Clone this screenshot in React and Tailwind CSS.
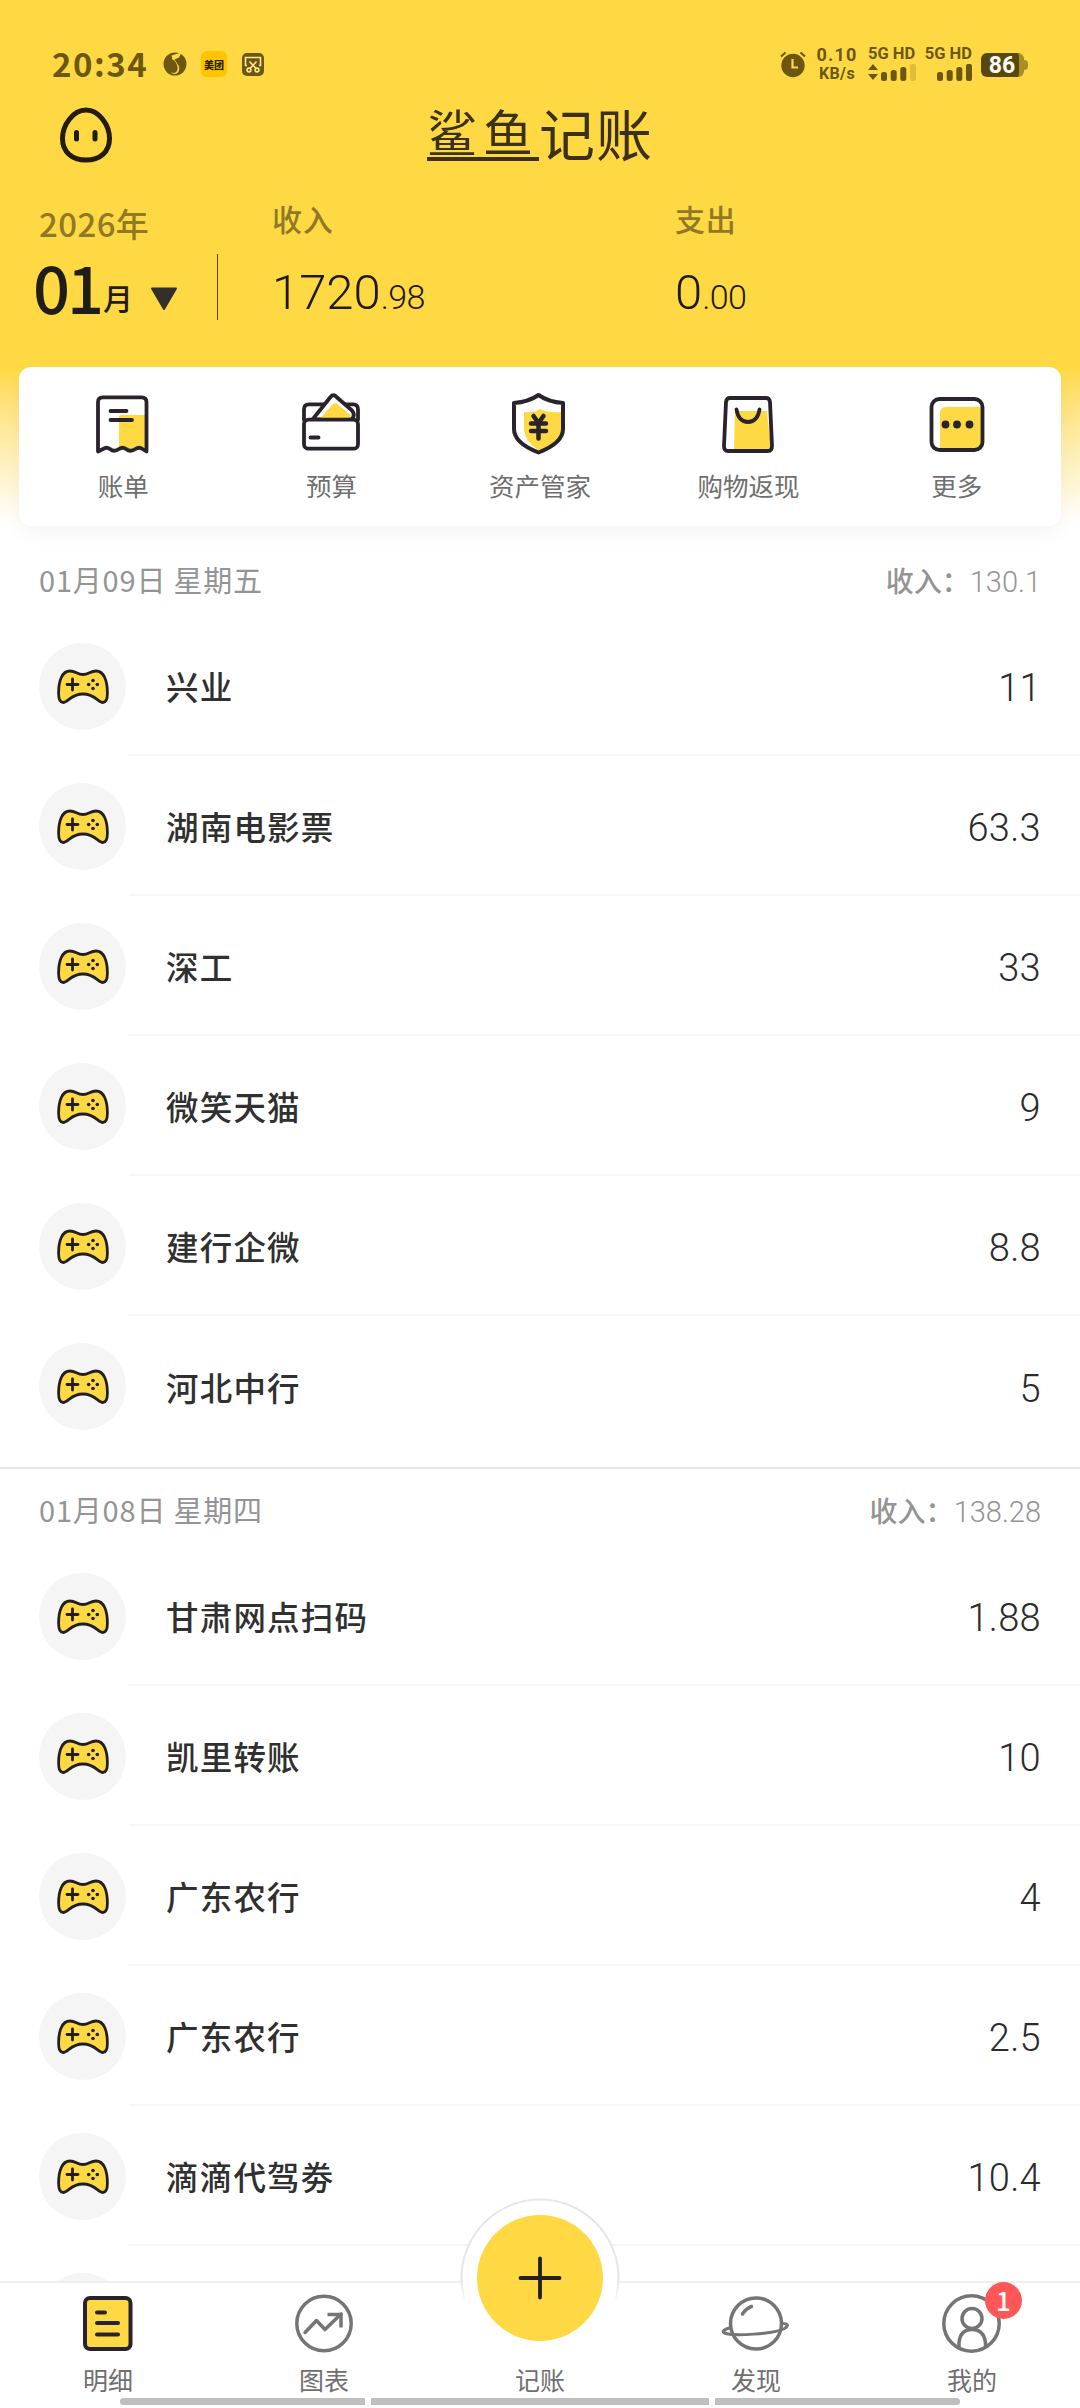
const income = '收入';

const quickActions = [
  { label: '账单', Icon: BillIcon },
  { label: '预算', Icon: WalletIcon },
  { label: '资产管家', Icon: ShieldIcon },
  { label: '购物返现', Icon: BagIcon },
  { label: '更多', Icon: MoreIcon },
];

const days = [
  {
    date: '01月09日 星期五',
    total: '130.1',
    records: [
      { name: '兴业', amount: '11' },
      { name: '湖南电影票', amount: '63.3' },
      { name: '深工', amount: '33' },
      { name: '微笑天猫', amount: '9' },
      { name: '建行企微', amount: '8.8' },
      { name: '河北中行', amount: '5' },
    ],
  },
  {
    date: '01月08日 星期四',
    total: '138.28',
    records: [
      { name: '甘肃网点扫码', amount: '1.88' },
      { name: '凯里转账', amount: '10' },
      { name: '广东农行', amount: '4' },
      { name: '广东农行', amount: '2.5' },
      { name: '滴滴代驾劵', amount: '10.4' },
      { name: '', amount: '' },
    ],
  },
];

function BillIcon() {
  return (
    <svg width="60" height="64" viewBox="0 0 60 64" fill="none">
      <path d="M26 26q0-2 2-2h26v36l-8-3-8.500 3-8-3-3.500 1z" fill="#FFD943" />
      <path
        d="M5 60.500V11q0-4.700 4.700-4.700h39q4.800 0 4.800 4.700v49.500l-4-2.500q-3.500-2.500-7 0-5 3.500-9.500 0-3.500-2.500-7 0-5 3.500-9 0-3.500-2.500-7 0z"
        stroke="#28232d" strokeWidth="3.800" strokeLinejoin="round"
      />
      <path d="M17.500 20h16M17.500 29h21.500" stroke="#28232d" strokeWidth="3.800" strokeLinecap="round" />
    </svg>
  );
}

function WalletIcon() {
  return (
    <svg width="60" height="64" viewBox="0 0 60 64" fill="none" stroke="#28232d" strokeWidth="3.800" strokeLinejoin="round" strokeLinecap="round">
      <path d="M2 29V18.300q0-5 5-5h44q5 0 5 5v10.500" />
      <path d="M10.500 28.500 28.500 6q3-3.500 6 0L50 19.500q3.500 4 0 9z" fill="#fff" />
      <path d="M18.500 27 31 13q2-2 4.500 0L49 24.500 47.500 27z" fill="#FFD943" stroke="none" />
      <rect x="2" y="28.700" width="54" height="29" rx="4.500" fill="#fff" />
      <path d="M8.500 46.500h8" />
    </svg>
  );
}

function ShieldIcon() {
  return (
    <svg width="60" height="64" viewBox="1.500 0 60 64" fill="none" stroke="#28232d" strokeLinejoin="round" strokeLinecap="round">
      <path d="M15.500 21q10 1 16-3 8 4 22 3v15q0 15-22 24-16-9-16-24z" fill="#FFD943" stroke="none" />
      <path d="M30 4q-10 7-24.500 8v26q0 14 24.500 23.500Q54.500 52 54.500 38V12Q40 11 30 4z" strokeWidth="4" />
      <path d="m25 25 5 7 5-7M22.500 32.500h15M22.500 40h15M30 33v14.500" strokeWidth="4.500" />
    </svg>
  );
}

function BagIcon() {
  return (
    <svg width="60" height="64" viewBox="0 0 60 64" fill="none" stroke="#28232d" strokeWidth="3.800" strokeLinejoin="round" strokeLinecap="round">
      <path d="M17 20h32l4 38H16z" fill="#FFD943" stroke="none" />
      <path d="M12 7h36q3.500 0 4 4l2 44q0 5-4 5H10q-4 0-4-5l2-44q.5-4 4-4z" />
      <path d="M18.500 18.500Q20.500 31 30 31t11.500-12.500" />
    </svg>
  );
}

function MoreIcon() {
  return (
    <svg width="60" height="64" viewBox="0 0 60 64" fill="none">
      <path d="M13 22q0-6 6-6h36v41H13z" fill="#FFD943" />
      <rect x="4.500" y="8" width="51" height="51" rx="8" stroke="#28232d" strokeWidth="3.800" />
      <g fill="#28232d">
        <circle cx="18.500" cy="33.500" r="3.900" />
        <circle cx="30" cy="33.500" r="3.900" />
        <circle cx="42.500" cy="33.500" r="3.900" />
      </g>
    </svg>
  );
}

function GamepadIcon() {
  return (
    <svg width="52" height="36" viewBox="0 0 52 36" fill="none" stroke="#231f20" strokeLinecap="round">
      <path
        d="M26 5.500C20 5.500 19 2 13 2 5 2 1.600 12 1.600 24c0 5 1.200 9.500 4.600 9.500C11 33.500 14 25 26 25s15 8.500 19.800 8.500c3.400 0 4.600-4.500 4.600-9.500C50.400 12 47 2 39 2c-6 0-7 3.500-13 3.500z"
        fill="#FFD943" strokeWidth="2.800"
      />
      <path d="M10 15.500h11M15.500 10v11" strokeWidth="2.800" />
      <g fill="#231f20" stroke="none">
        <circle cx="36" cy="11.500" r="1.800" />
        <circle cx="36" cy="19.500" r="1.800" />
        <circle cx="31.700" cy="15.500" r="1.800" />
        <circle cx="40.300" cy="15.500" r="1.800" />
      </g>
    </svg>
  );
}

function ListIcon() {
  return (
    <svg width="70" height="62" viewBox="0 0 70 62" fill="none" stroke="#28232d" strokeWidth="4" strokeLinecap="round">
      <rect x="12" y="5" width="45.500" height="51" rx="5" fill="#FFD943" />
      <path d="M24 19.500h8M24 30h21M24 41.500h21" />
    </svg>
  );
}

function TrendIcon() {
  return (
    <svg width="70" height="62" viewBox="0 0 70 62" fill="none" stroke="#757575" strokeWidth="3.500">
      <circle cx="35" cy="30.500" r="27.200" />
      <path d="m16 39.500 11.500-12 8.500 9L52 21" strokeLinejoin="round" strokeLinecap="round" />
      <path d="M38.500 21.500h13.500v13" />
    </svg>
  );
}

function PlanetIcon() {
  return (
    <svg width="70" height="62" viewBox="0 0 70 62" fill="none" stroke="#757575" strokeWidth="3.500" strokeLinecap="round">
      <circle cx="35" cy="30.500" r="25.500" />
      <path d="M21.500 21q4-6 9-7.500" />
      <path d="M9.500 34.500C4 36 0 38.500 3.500 40c8 3.500 50 1 60-4.500 5-3 3-5.500-3-5" strokeWidth="3" />
    </svg>
  );
}

function PersonIcon() {
  return (
    <svg width="70" height="62" viewBox="0 0 70 62" fill="none" stroke="#757575" strokeWidth="3.500">
      <circle cx="34.500" cy="30.500" r="27.700" />
      <circle cx="35" cy="25.500" r="10" />
      <path d="M22 54.500V50q1-13.500 13-13.500T48.500 50v4.500" />
    </svg>
  );
}

function SignalBars({ faded }) {
  return (
    <svg width="35" height="17" viewBox="0 0 35 17" fill="#6b5710">
      <rect x="0" y="8" width="6" height="9" rx="2.500" />
      <rect x="9.700" y="6" width="6" height="11" rx="2.500" />
      <rect x="19.300" y="3" width="6" height="14" rx="2.500" />
      <rect x="29" y="0" width="6" height="17" rx="2" opacity={faded ? 0.2 : 1} />
    </svg>
  );
}

function StatusBar() {
  return (
    <div className="flex h-[90px] items-start justify-between pl-[52px] pr-[52px] pt-[46px] text-[#6b5710]">
      <div className="flex h-9 items-center">
        <span className="-mt-[3px] w-[111px] text-[33px] font-bold leading-9 tracking-[1.5px]">20:34</span>
        <svg width="24" height="24" viewBox="0 0 24 24" className="mr-[14px]">
          <circle cx="12" cy="12" r="11.500" fill="#6b5710" />
          <path d="M8.500 3.500 18.500.5 16 5.500l-4.500 2 4 6q2 4-1 7.500-3 2-6 0-3-4-.5-9Q10 7 8.500 3.500z" fill="#FFD943" />
          <path d="M5 8q6-3 9 5 2 6-2.500 8Q6 21 4 15z" fill="#6b5710" />
        </svg>
        <span className="mr-[15px] flex h-[26px] w-[26px] items-center justify-center rounded-md bg-[#FFC300] text-[10px] font-black text-[#2b1d00]">
          美团
        </span>
        <svg width="22" height="23" viewBox="0 0 22 23" fill="none" stroke="#FFE98a" strokeWidth="1.600">
          <rect width="22" height="23" rx="5" fill="#6b5710" stroke="none" />
          <path d="M5 12.500H3.500V4.500h15v8H17M7.500 8.500l6.500 7M14.500 8.500l-6.500 7" />
          <circle cx="7" cy="17" r="1.900" />
          <circle cx="15" cy="17" r="1.900" />
        </svg>
      </div>
      <div className="flex items-start font-[Roboto] font-bold">
        <svg width="26" height="27" viewBox="0 0 26 27" fill="none" className="mr-[11px] mt-[5px]">
          <circle cx="13" cy="14.500" r="11.700" fill="#6b5710" />
          <path d="M1 5.500 5.500 1.500M25 5.500l-4.500-4" stroke="#6b5710" strokeWidth="2.200" />
          <path d="M12.500 8v8.500h5.500" stroke="#FFD943" strokeWidth="2.200" />
        </svg>
        <div className="mr-[11px] flex w-10 flex-col items-center">
          <span className="text-[18px] leading-[18px] tracking-[1.2px]">0.10</span>
          <span className="mt-px text-[16px] leading-[18px] tracking-[.4px]">KB/s</span>
        </div>
        <div className="mr-2 flex w-12 flex-col">
          <span className="whitespace-nowrap text-[16.500px] leading-[15px]">5G HD</span>
          <div className="mt-[3px] flex justify-between">
            <svg width="10" height="17" viewBox="0 0 10 17" fill="#6b5710">
              <path d="M5 0l5 6H0zM5 16l5-6H0z" />
            </svg>
            <SignalBars faded />
          </div>
        </div>
        <div className="mr-[9px] flex w-12 flex-col items-end">
          <span className="whitespace-nowrap text-[16.500px] leading-[15px]">5G HD</span>
          <div className="mt-[3px]">
            <SignalBars />
          </div>
        </div>
        <div className="mt-[7px] flex items-center">
          <div className="flex h-[24px] w-[43px] items-center justify-center rounded-[6px] border-r-[5px] border-[#a88e25] bg-[#574708] pl-1 text-[23px] leading-none text-white">
            86
          </div>
          <div className="h-2.5 w-1 rounded-r bg-[#a88e25]" />
        </div>
      </div>
    </div>
  );
}

function Amount({ label, whole, cents, className }) {
  return (
    <div className={className}>
      <div className="text-[30px] leading-9 text-[#8f7926] font-medium tracking-[.8px]">{label}</div>
      <div className="mt-[29px] font-[Roboto] text-[49px] font-light leading-[56px] text-[#1f1a08]">
        {whole}
        <span className="text-[34px] tracking-[-.6px]">{cents}</span>
      </div>
    </div>
  );
}

function Header() {
  return (
    <header className="h-[526px] bg-linear-to-b from-[#FFD943] from-70% to-white">
      <StatusBar />
      <div className="flex h-[90px] items-start">
        <svg width="54" height="56" viewBox="0 0 54 56" fill="none" className="ml-[59px] mt-[17px]">
          <path d="M27 3C14 3 3.500 18 3.500 31.500S13 53 27 53s23.500-8 23.500-21.500S40 3 27 3z" stroke="#231c0a" strokeWidth="5" />
          <rect x="15" y="23" width="5" height="11.500" rx="2.500" fill="#231c0a" />
          <rect x="33.500" y="23" width="5" height="11.500" rx="2.500" fill="#231c0a" />
        </svg>
        <h1 className="ml-[314px] flex items-start pt-[15px] text-[#3a3118]">
          <span className="h-[56px] border-b-4 border-[#3a3118] text-[50px] leading-[50px] tracking-[6px]">鲨鱼</span>
          <span className="text-[56px] leading-[54px] tracking-[1px]">记账</span>
        </h1>
      </div>
      <div className="flex h-[187px]">
        <div className="w-[217px] pt-[23px] pl-[39px]">
          <div className="text-[33px] font-medium leading-10 tracking-[.4px] text-[#8f7926]">2026年</div>
          <div className="-ml-[6px] mt-[6px] flex items-baseline text-[#1f1d16]">
            <span className="text-[65px] font-medium leading-[74px] tracking-[-3px]">01</span>
            <span className="relative -top-1 ml-[2px] text-[30px] font-medium">月</span>
            <svg width="28" height="24" viewBox="0 0 28 24" className="relative -top-[3px] ml-[17px]">
              <path d="M2 1.500h24L14 22z" fill="#332f2a" stroke="#332f2a" strokeWidth="2" strokeLinejoin="round" />
            </svg>
          </div>
        </div>
        <div className="mt-[74px] h-[66px] w-px bg-[#4b3f14]" />
        <Amount className="w-[403px] pl-[54px] pt-[20px]" label={income} whole="1720" cents=".98" />
        <Amount className="pl-[54px] pt-[20px]" label="支出" whole="0" cents=".00" />
      </div>
      <nav className="mx-[19px] grid h-[159px] grid-cols-5 rounded-[12px] bg-white shadow-[0_8px_20px_rgba(0,0,0,0.04)]">
        {quickActions.map(({ label, Icon }) => (
          <div key={label} className="flex flex-col items-center pt-[24px]">
            <Icon />
            <span className="mt-[12px] text-[25.500px] leading-9 text-[#6f6f6f]">{label}</span>
          </div>
        ))}
      </nav>
    </header>
  );
}

function Record({ name, amount, last }) {
  return (
    <li className="flex h-[140px] pl-[39px]">
      <div className="mt-[27px] flex h-[87px] w-[87px] items-center justify-center rounded-full bg-[#f5f5f5]">
        <GamepadIcon />
      </div>
      <div className={`ml-[3px] flex flex-1 items-center justify-between pl-[37px] pr-[39px] ${last ? '' : 'border-b-2 border-[#f7f7f7]'}`}>
        <span className="pt-0.5 text-[32.500px] font-medium tracking-[1.200px] text-[#303030]">{name}</span>
        <span className="pt-[7px] font-[Roboto] text-[38px] font-light tracking-[.3px] text-[#2b2b2b]">{amount}</span>
      </div>
    </li>
  );
}

function Day({ date, total, records }) {
  return (
    <section>
      <div className="flex h-[78px] items-center justify-between pl-[39px] pr-[39px] pt-[5px] text-[#949494]">
        <span className="text-[29px] tracking-[.8px]">{date}</span>
        <span className="pt-1 text-[28px] font-medium">
          {income}：<span className="font-[Roboto] text-[29px] font-light">{total}</span>
        </span>
      </div>
      <ul>
        {records.map((record, i) => (
          <Record key={i} {...record} last={i === records.length - 1} />
        ))}
      </ul>
    </section>
  );
}

function Tab({ label, children }) {
  return (
    <div className="flex flex-1 flex-col items-center">
      <div className="relative mt-[10px] h-[62px]">{children}</div>
      <span className="mt-[6px] text-[25px] leading-9 text-[#6f6f6f]">{label}</span>
    </div>
  );
}

function TabBar() {
  return (
    <footer className="absolute inset-x-0 bottom-0 flex h-[127px] border-t-2 border-[#efefef] bg-white">
      <Tab label="明细"><ListIcon /></Tab>
      <Tab label="图表"><TrendIcon /></Tab>
      <Tab label="记账">
        <svg width="160" height="160" viewBox="0 0 160 160" fill="none" className="absolute -top-[95px] left-1/2 -translate-x-1/2">
          <defs>
            <linearGradient id="ring" x1="0" y1="0" x2="0" y2="160" gradientUnits="userSpaceOnUse">
              <stop offset=".52" stopColor="#e6e6e6" />
              <stop offset=".66" stopColor="#fff" />
            </linearGradient>
          </defs>
          <circle cx="80" cy="80" r="78.500" fill="#fff" stroke="url(#ring)" strokeWidth="2" />
          <circle cx="80" cy="80" r="63" fill="#FFD943" />
          <path d="M60.500 80h39M80 60.500v39" stroke="#231f20" strokeWidth="3.800" strokeLinecap="round" />
        </svg>
      </Tab>
      <Tab label="发现"><PlanetIcon /></Tab>
      <Tab label="我的">
        <PersonIcon />
        <span className="absolute -top-[11px] left-[48px] flex h-[37px] w-[37px] items-center justify-center rounded-full bg-[#FF5757] pb-0.5 text-[26px] font-medium text-white">
          1
        </span>
      </Tab>
      <div className="absolute bottom-[3px] left-[120px] flex gap-1.5">
        <i className="h-[7px] w-[245px] rounded-l-full bg-[#bfbfbf]" />
        <i className="h-[7px] w-[338px] bg-[#bfbfbf]" />
        <i className="h-[7px] w-[245px] rounded-r-full bg-[#bfbfbf]" />
      </div>
    </footer>
  );
}

export default function App() {
  return (
    <div className="relative h-[2408px] w-[1080px] overflow-hidden bg-white font-['Noto_Sans_CJK_SC',sans-serif]">
      <Header />
      <main className="pt-3">
        <Day {...days[0]} />
        <div className="mt-[11px] border-t-2 border-[#e6e6e6]" />
        <div className="-mt-px">
          <Day {...days[1]} />
        </div>
      </main>
      <TabBar />
    </div>
  );
}
